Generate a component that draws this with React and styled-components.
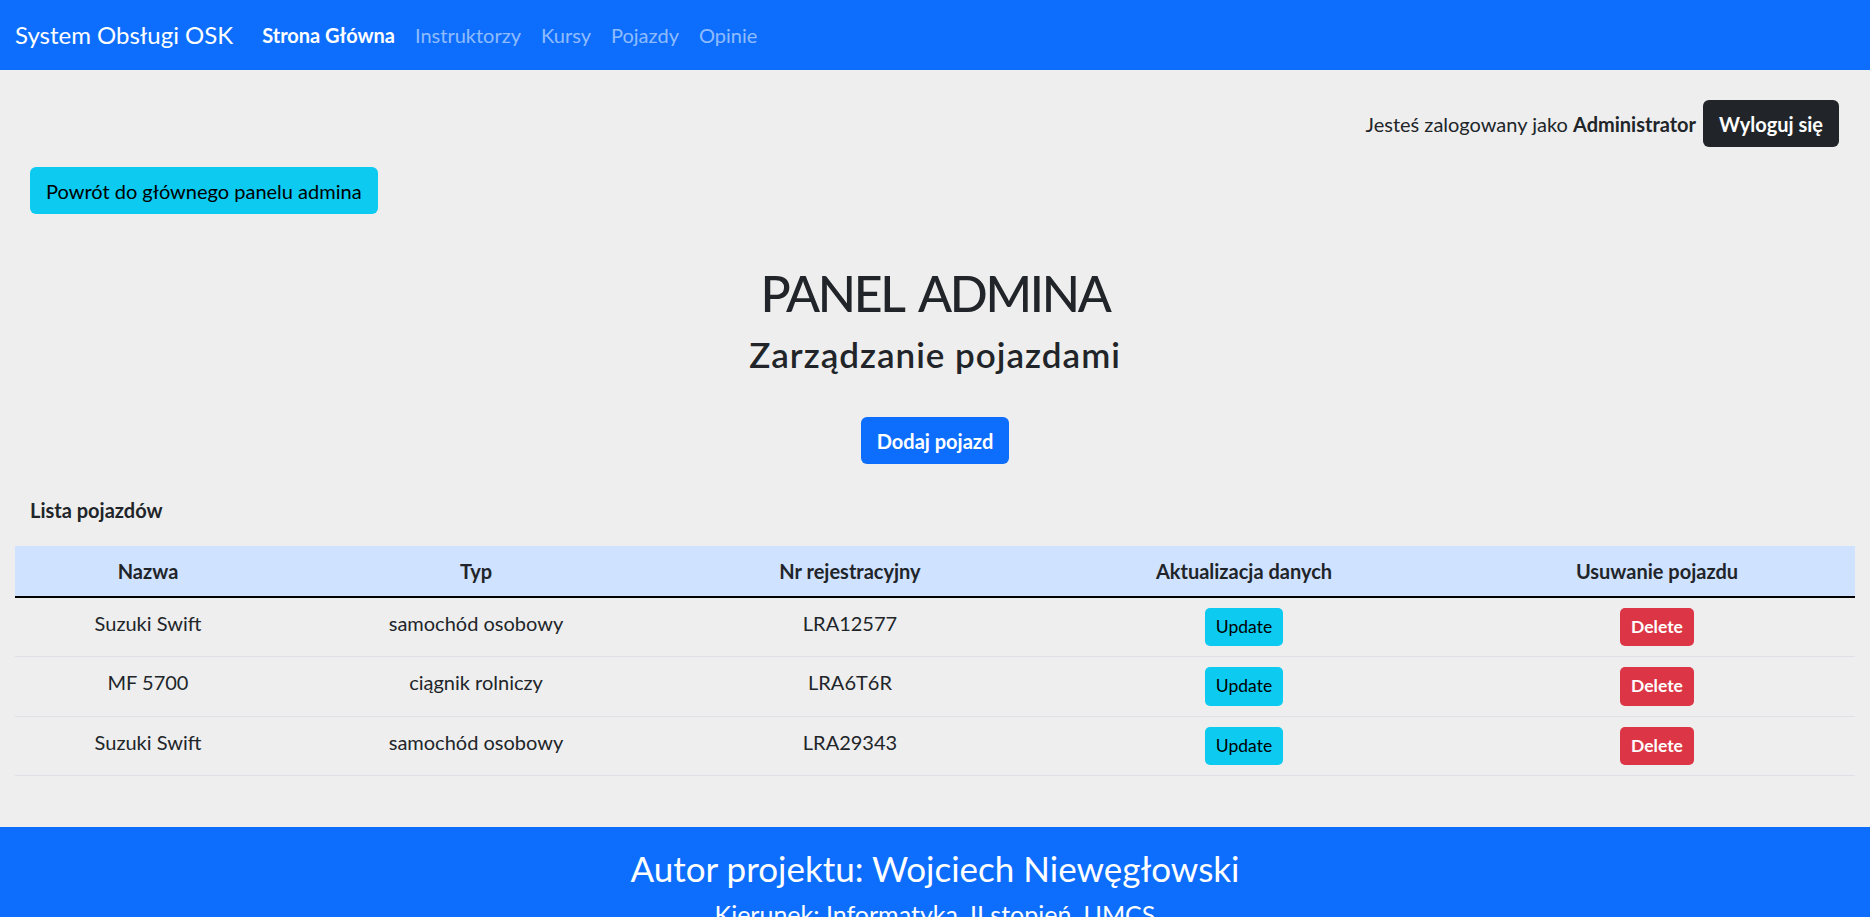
import React from "react";
import styled, { createGlobalStyle, css } from "styled-components";

const GlobalStyle = createGlobalStyle`
  * { box-sizing: border-box; }
  html, body { margin: 0; padding: 0; background: #eeeeee; }
  body {
    font-family: Lato, "Noto Sans", sans-serif;
    font-size: 20px;
    line-height: 1.5;
    color: #212529;
  }
`;

const Navbar = styled.nav`
  height: 70px;
  background: #0d6efd;
  display: flex;
  align-items: center;
  padding: 0 15px;
`;

const Brand = styled.a`
  font-size: 24px;
  color: #fff;
  text-decoration: none;
  margin-right: 19px;
`;

const NavLink = styled.a`
  padding: 0 10px;
  font-size: 20px;
  text-decoration: none;
  color: ${(p) => (p.$active ? "#ffffff" : "rgba(255,255,255,0.55)")};
  font-weight: ${(p) => (p.$active ? 700 : 400)};
`;

const Main = styled.main`
  padding: 0 15px;
`;

const TopBar = styled.div`
  display: flex;
  justify-content: flex-end;
  align-items: center;
  gap: 7px;
  padding: 30px 16px 0 0;
`;

const variants = {
  dark: css`
    background: #212529;
    color: #fff;
    font-weight: 700;
  `,
  info: css`
    background: #0dcaf0;
    color: #000;
  `,
  primary: css`
    background: #0d6efd;
    color: #fff;
    font-weight: 700;
  `,
  danger: css`
    background: #dc3545;
    color: #fff;
    font-weight: 700;
  `,
};

const Button = styled.button`
  font-family: inherit;
  font-size: ${(p) => (p.$small ? "17.5px" : "20px")};
  line-height: 1.5;
  padding: ${(p) => (p.$small ? "5px 10px" : "7.5px 15px")};
  border: 1px solid transparent;
  border-radius: ${(p) => (p.$small ? "5px" : "6px")};
  cursor: pointer;
  ${(p) => variants[p.$variant]}
`;

const BackRow = styled.div`
  padding: 20px 0 0 15px;
`;

const Header = styled.header`
  text-align: center;
  padding-top: 49px;
`;

const Title = styled.h1`
  margin: 0 0 10px;
  font-size: 50px;
  line-height: 1.2;
  font-weight: 500;
  letter-spacing: -2.3px;
  word-spacing: 7px;
`;

const Subtitle = styled.h3`
  margin: 0 0 42px;
  font-size: 35px;
  line-height: 1.2;
  font-weight: 600;
  letter-spacing: 1px;
`;

const ListLabel = styled.div`
  padding: 31px 0 0 15px;
  font-weight: 700;
  margin-bottom: 21px;
`;

const Table = styled.table`
  width: 100%;
  border-collapse: collapse;
  table-layout: fixed;
`;

const Col = styled.col`
  width: ${(p) => p.$w}px;
`;

const HeadRow = styled.tr`
  background: #cfe2ff;
  border-bottom: 2px solid #000;
`;

const Th = styled.th`
  padding: 10px;
  font-weight: 700;
  text-align: center;
  vertical-align: top;
`;

const Row = styled.tr`
  border-bottom: 1px solid #dee2e6;
`;

const Td = styled.td`
  padding: 10px;
  text-align: center;
  vertical-align: top;
`;

const Footer = styled.footer`
  margin-top: 51px;
  background: #0d6efd;
  color: #fff;
  text-align: center;
  padding: 20px 0;
`;

const FooterTitle = styled.h3`
  margin: 0 0 10px;
  font-size: 35px;
  line-height: 1.2;
  font-weight: 400;
`;

const FooterSub = styled.h5`
  margin: 0;
  font-size: 25px;
  line-height: 1.2;
  font-weight: 400;
`;

const vehicles = [
  { name: "Suzuki Swift", type: "samochód osobowy", reg: "LRA12577" },
  { name: "MF 5700", type: "ciągnik rolniczy", reg: "LRA6T6R" },
  { name: "Suzuki Swift", type: "samochód osobowy", reg: "LRA29343" },
];

export default function App() {
  return (
    <>
      <GlobalStyle />
      <Navbar>
        <Brand href="#">System Obsługi OSK</Brand>
        <NavLink $active href="#">Strona Główna</NavLink>
        <NavLink href="#">Instruktorzy</NavLink>
        <NavLink href="#">Kursy</NavLink>
        <NavLink href="#">Pojazdy</NavLink>
        <NavLink href="#">Opinie</NavLink>
      </Navbar>
      <Main>
        <TopBar>
          <span>
            Jesteś zalogowany jako <b>Administrator</b>
          </span>
          <Button $variant="dark">Wyloguj się</Button>
        </TopBar>
        <BackRow>
          <Button $variant="info">Powrót do głównego panelu admina</Button>
        </BackRow>
        <Header>
          <Title>PANEL ADMINA</Title>
          <Subtitle>Zarządzanie pojazdami</Subtitle>
          <Button $variant="primary">Dodaj pojazd</Button>
        </Header>
        <ListLabel>Lista pojazdów</ListLabel>
        <Table>
          <colgroup>
            <Col $w={266} />
            <Col $w={390} />
            <Col $w={358} />
            <Col $w={430} />
            <Col $w={396} />
          </colgroup>
          <thead>
            <HeadRow>
              <Th>Nazwa</Th>
              <Th>Typ</Th>
              <Th>Nr rejestracyjny</Th>
              <Th>Aktualizacja danych</Th>
              <Th>Usuwanie pojazdu</Th>
            </HeadRow>
          </thead>
          <tbody>
            {vehicles.map((v, i) => (
              <Row key={i}>
                <Td>{v.name}</Td>
                <Td>{v.type}</Td>
                <Td>{v.reg}</Td>
                <Td>
                  <Button $small $variant="info">Update</Button>
                </Td>
                <Td>
                  <Button $small $variant="danger">Delete</Button>
                </Td>
              </Row>
            ))}
          </tbody>
        </Table>
      </Main>
      <Footer>
        <FooterTitle>Autor projektu: Wojciech Niewęgłowski</FooterTitle>
        <FooterSub>Kierunek: Informatyka, II stopień, UMCS</FooterSub>
      </Footer>
    </>
  );
}
